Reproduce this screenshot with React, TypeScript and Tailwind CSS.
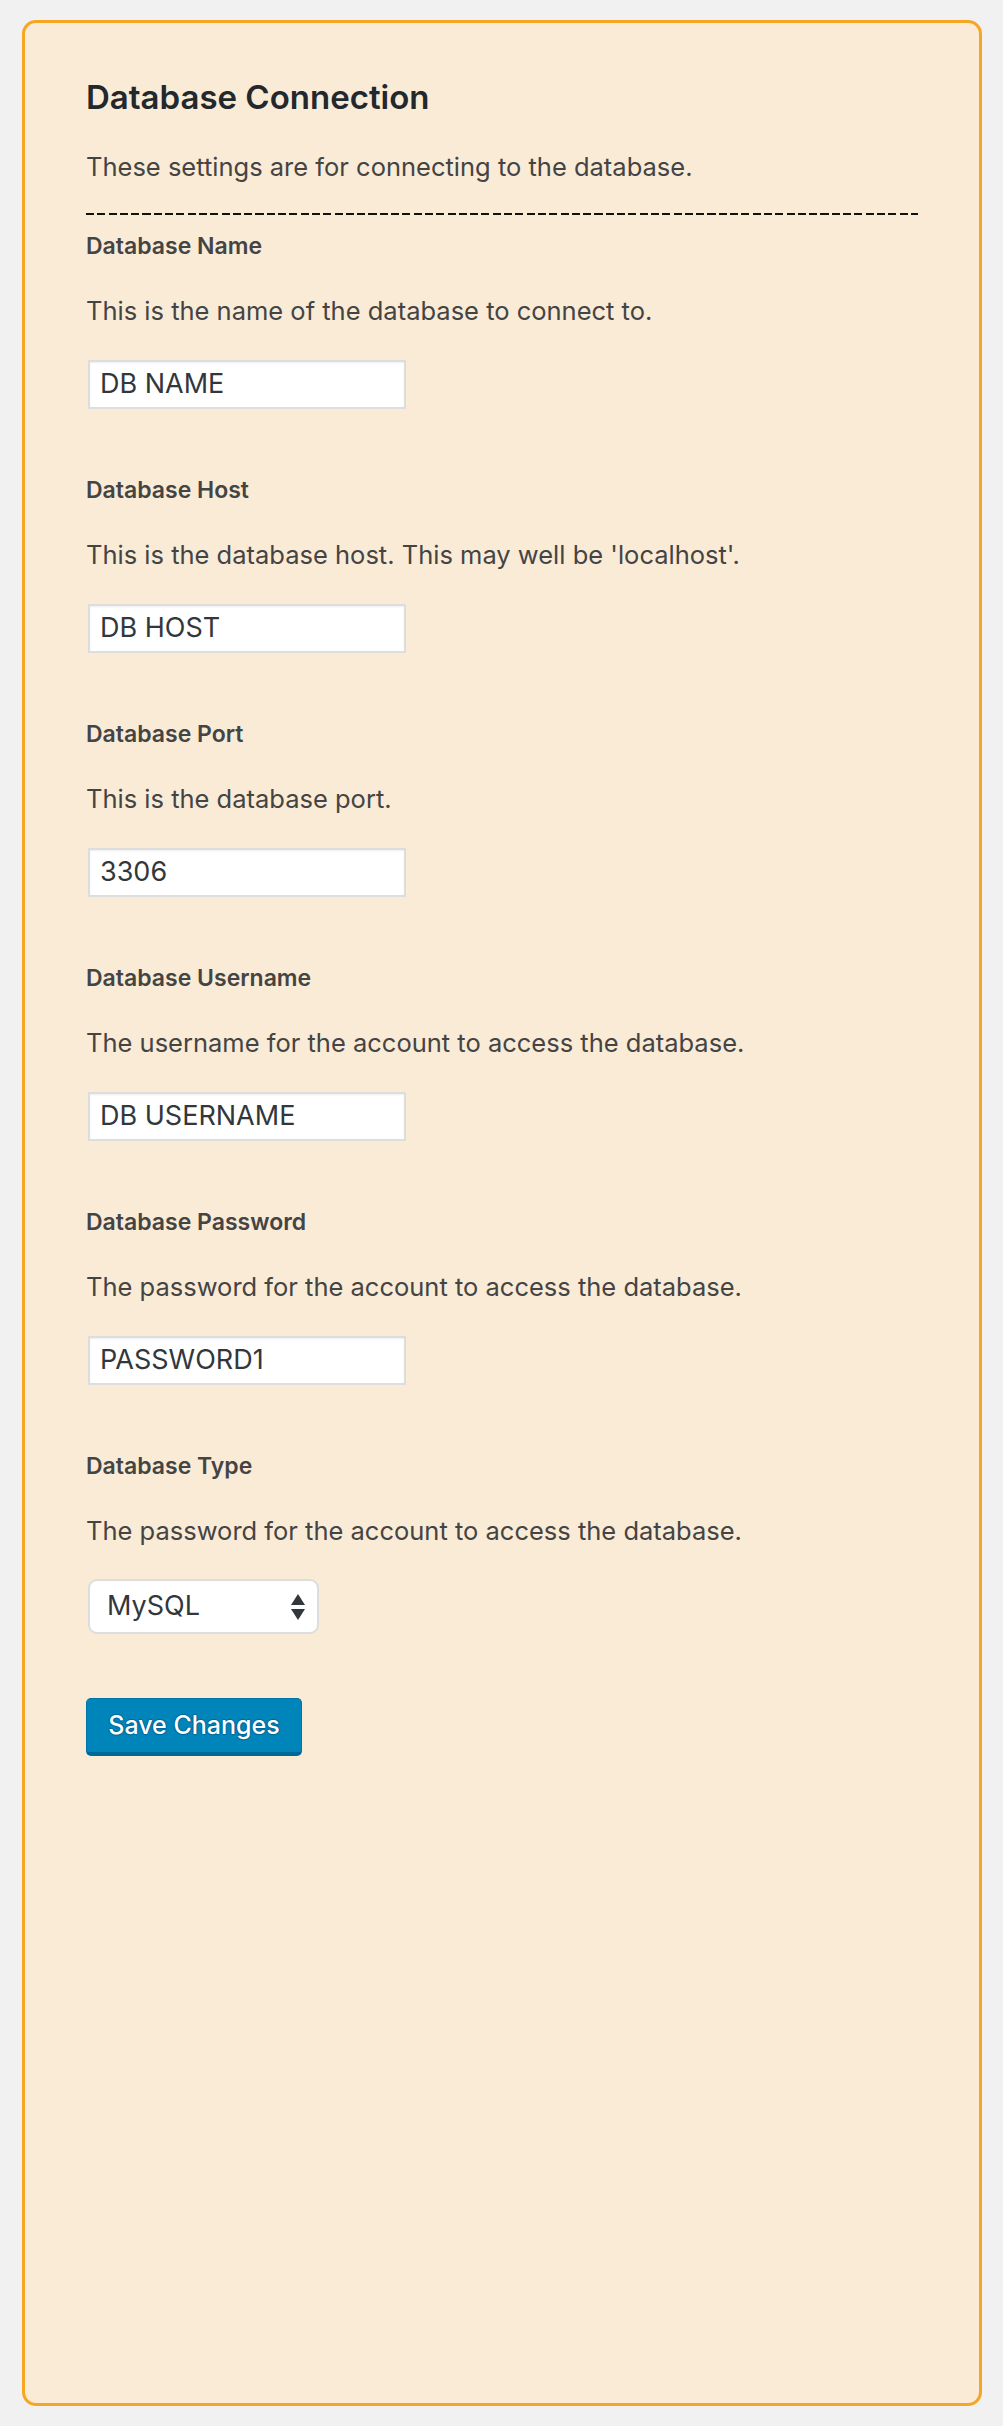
import React from "react";

const font = { fontFamily: "Inter, 'Noto Sans', sans-serif" };

type Field = { label: string; desc: string; value: string };

const fields: Field[] = [
  { label: "Database Name", desc: "This is the name of the database to connect to.", value: "DB NAME" },
  { label: "Database Host", desc: "This is the database host. This may well be 'localhost'.", value: "DB HOST" },
  { label: "Database Port", desc: "This is the database port.", value: "3306" },
  { label: "Database Username", desc: "The username for the account to access the database.", value: "DB USERNAME" },
  { label: "Database Password", desc: "The password for the account to access the database.", value: "PASSWORD1" },
];

function Label({ children }: { children: React.ReactNode }) {
  return <div className="h-[30px] text-[23px] leading-[30px] font-semibold text-[#444]">{children}</div>;
}

function Desc({ children }: { children: React.ReactNode }) {
  return <p className="mt-[34px] h-[32px] text-[25.5px] leading-[32px] text-[#444] whitespace-nowrap">{children}</p>;
}

export default function App() {
  return (
    <div className="min-h-[2426px] bg-[#f1f1f1] pt-[20px] pl-[22px]" style={font}>
      <div className="w-[960px] h-[2386px] border-[3px] border-[#f6a623] rounded-[14px] bg-[#faebd7] pt-[54px] px-[61px]">
        <h2 className="h-[40px] text-[33px] leading-[40px] font-semibold text-[#23282d]">Database Connection</h2>
        <p className="mt-[34px] h-[32px] text-[25.5px] leading-[32px] text-[#444]">
          These settings are for connecting to the database.
        </p>
        <div className="mt-[30px] h-[2px] bg-[repeating-linear-gradient(to_right,#111_0,#111_8px,transparent_8px,transparent_11.3px)]" />
        <div className="mt-[16px]">
          {fields.map((f, i) => (
            <div key={f.label} className={i === 0 ? "" : "mt-[66px]"}>
              <Label>{f.label}</Label>
              <Desc>{f.desc}</Desc>
              <div className="mt-[33px] ml-[2px] w-[318px] h-[49px] border-2 border-[#dddddd] bg-white shadow-[inset_0_1px_2px_rgba(0,0,0,0.07)] flex items-center pl-[10px] text-[27px] text-[#32373c]">
                {f.value}
              </div>
            </div>
          ))}
          <div className="mt-[66px]">
            <Label>Database Type</Label>
            <Desc>The password for the account to access the database.</Desc>
            <div className="mt-[32px] ml-[2px] w-[231px] h-[55px] border-2 border-[#dddddd] rounded-[9px] bg-white flex items-center justify-between pl-[17px] pr-[12px] text-[27px] text-[#32373c]">
              <span>MySQL</span>
              <svg width="14" height="26" viewBox="0 0 14 26">
                <polygon points="7,0 14,11 0,11" fill="#32373c" />
                <polygon points="0,15 14,15 7,26" fill="#32373c" />
              </svg>
            </div>
            <button className="mt-[64px] w-[216px] h-[58px] rounded-[5px] bg-[#0085ba] border border-[#0073aa] border-b-[4px] border-b-[#006799] text-white text-[25px] font-medium [text-shadow:0_-1px_1px_#006799,1px_0_1px_#006799,0_1px_1px_#006799,-1px_0_1px_#006799]">
              Save Changes
            </button>
          </div>
        </div>
      </div>
    </div>
  );
}
